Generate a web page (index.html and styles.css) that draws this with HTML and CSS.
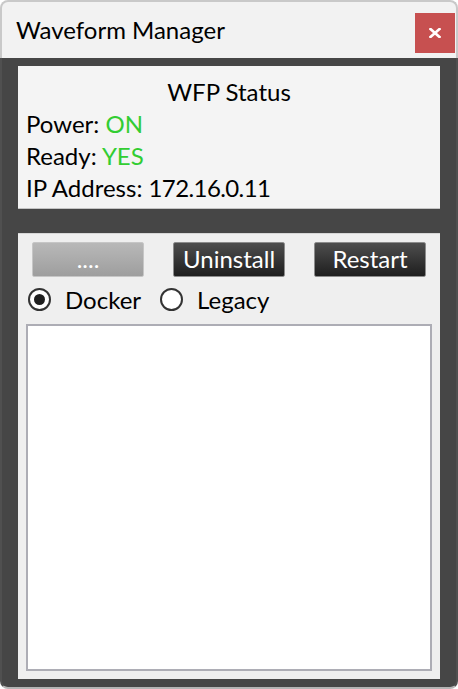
FILE: index.html
```html
<!DOCTYPE html>
<html>
<head>
<meta charset="utf-8">
<title>Waveform Manager</title>
<link rel="stylesheet" href="styles.css">
</head>
<body>
<div class="window">
  <div class="titlebar">
    <span class="title">Waveform Manager</span>
    <button class="close" aria-label="Close">
      <svg width="12" height="10" viewBox="0 0 12 10"><path d="M1.5 1 L10.5 9 M10.5 1 L1.5 9" stroke="#fff" stroke-width="2.6" stroke-linecap="square"/></svg>
    </button>
  </div>
  <div class="body">
    <div class="panel status">
      <div class="heading">WFP Status</div>
      <div class="line">Power: <span class="ok">ON</span></div>
      <div class="line">Ready: <span class="ok">YES</span></div>
      <div class="line">IP Address: <span class="ip">172.16.0.11</span></div>
    </div>
    <div class="panel controls">
      <div class="buttons">
        <button class="btn disabled">....</button>
        <button class="btn dark">Uninstall</button>
        <button class="btn dark">Restart</button>
      </div>
      <div class="radios">
        <label class="radio"><span class="circle checked"></span><span class="rlabel">Docker</span></label>
        <label class="radio"><span class="circle"></span><span class="rlabel">Legacy</span></label>
      </div>
      <div class="log"></div>
    </div>
  </div>
</div>
</body>
</html>
```
FILE: styles.css
```css
html, body {
  margin: 0;
  padding: 0;
  background: #ffffff;
}
body {
  font-family: "Lato", "Liberation Sans", sans-serif;
  font-size: 24px;
  color: #000;
}
.window {
  width: 458px;
  height: 689px;
  display: flex;
  flex-direction: column;
  box-sizing: border-box;
}
.titlebar {
  height: 58px;
  box-sizing: border-box;
  background: #f2f2f2;
  border: 2px solid #c9c9c9;
  border-bottom: none;
  border-radius: 8px 8px 0 0;
  display: flex;
  align-items: center;
  padding-left: 14px;
  padding-right: 1px;
}
.title {
  flex: 1;
  line-height: 32px;
}
.close {
  width: 40px;
  height: 40px;
  border: none;
  padding: 0;
  margin: 0;
  background: #c75050;
  display: flex;
  align-items: center;
  justify-content: center;
  align-self: flex-start;
  margin-top: 11px;
}
.close svg {
  display: block;
}
.body {
  flex: 1;
  background: #464646;
  border: 2px solid #505050;
  border-top: none;
  border-bottom-color: #b4b4b4;
  border-radius: 0 0 8px 8px;
  padding: 8px 16px 8px 16px;
  display: flex;
  flex-direction: column;
  gap: 24px;
}
.panel {
  box-sizing: border-box;
}
.status {
  height: 143px;
  background: #f4f4f4;
  border-bottom: 1px solid #c4c4c4;
  padding: 10px 8px 0 8px;
  line-height: 32px;
}
.heading {
  text-align: center;
}
.ip {
  letter-spacing: -0.6px;
}
.ok {
  color: #32cd32;
}
.controls {
  flex: 1;
  background: #efefef;
  border-top: 1px solid #d6d6d6;
  padding: 8px 8px 8px 8px;
  display: flex;
  flex-direction: column;
}
.buttons {
  display: flex;
  justify-content: space-between;
  padding: 0 6px;
}
.btn {
  width: 112px;
  height: 35px;
  box-sizing: border-box;
  font-family: inherit;
  font-size: 24px;
  line-height: 30px;
  padding: 0 0 1px 0;
  border-radius: 2px;
  color: #fff;
}
.btn.disabled {
  background: linear-gradient(#b8b8b8, #9e9e9e);
  border: 1px solid #c6c6c6;
}
.btn.dark {
  background: linear-gradient(#4e4e4e, #1e1e1e);
  border: 1px solid #8c8c8c;
}
.radios {
  display: flex;
  align-items: center;
  margin-top: 11px;
  padding-left: 2px;
  height: 23px;
  gap: 19px;
}
.radio {
  display: flex;
  align-items: center;
  gap: 14px;
  line-height: 23px;
}
.circle {
  width: 23px;
  height: 23px;
  box-sizing: border-box;
  border: 2px solid #333;
  border-radius: 50%;
  background: #fff;
  display: flex;
  align-items: center;
  justify-content: center;
}
.circle.checked::after {
  content: "";
  width: 11px;
  height: 11px;
  border-radius: 50%;
  background: #1f1f1f;
}
.log {
  flex: 1;
  margin-top: 13px;
  background: #fff;
  border: 2px solid #adadb5;
}
```
